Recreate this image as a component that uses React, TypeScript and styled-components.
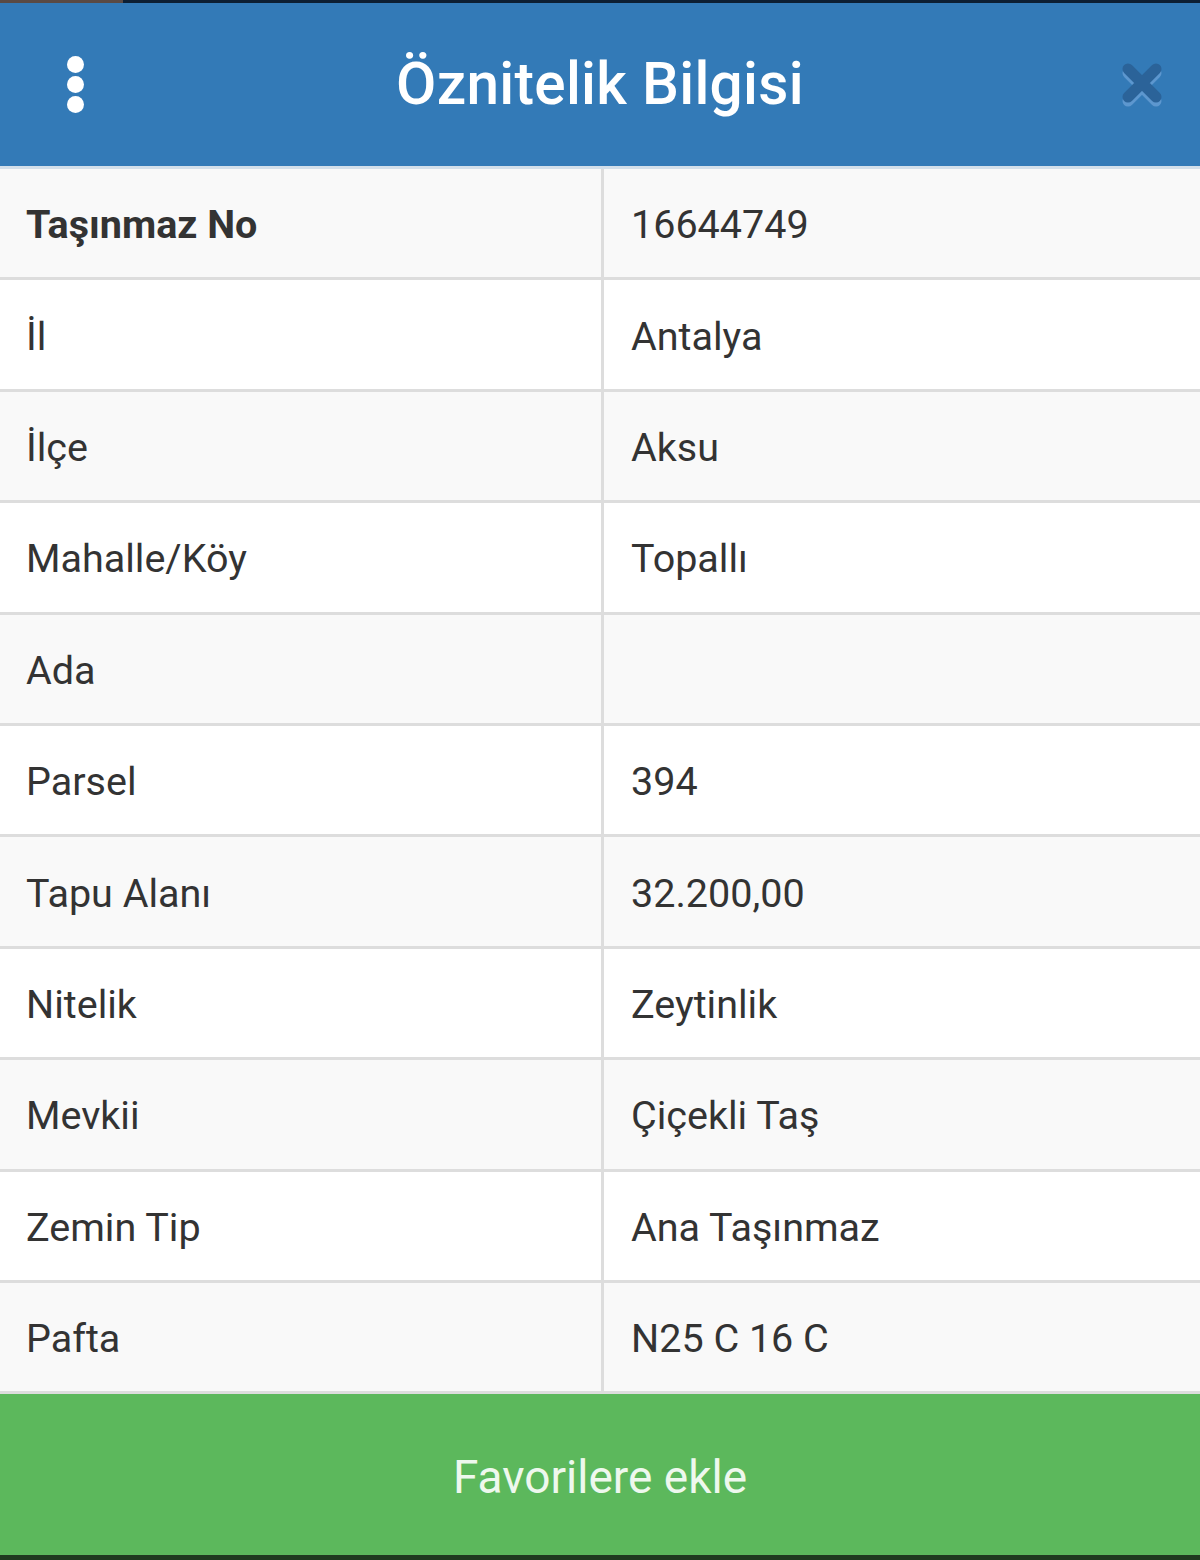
import React from 'react';
import styled, { createGlobalStyle } from 'styled-components';

const GlobalStyle = createGlobalStyle`
  html, body {
    margin: 0;
    padding: 0;
    background: #ffffff;
  }
  body {
    font-family: Roboto, "Noto Sans", "Liberation Sans", sans-serif;
  }
`;

const Page = styled.div`
  width: 1200px;
  height: 1560px;
  display: flex;
  flex-direction: column;
  overflow: hidden;
`;

const StatusStrip = styled.div`
  height: 3px;
  flex-shrink: 0;
  background: linear-gradient(to right, #5a4a44 0, #5a4a44 123px, #0d1f33 123px);
`;

const Header = styled.header`
  height: 163px;
  flex-shrink: 0;
  display: grid;
  grid-template-columns: 150px 1fr 150px;
  align-items: center;
  background: #337ab7;
  border-bottom: 3px solid #d3dfea;
`;

const MenuButton = styled.button`
  background: transparent;
  border: none;
  padding: 0;
  margin-left: 64px;
  width: 22px;
  display: flex;
  flex-direction: column;
  align-items: center;
  gap: 3px;
  cursor: pointer;
`;

const Dot = styled.span`
  width: 17px;
  height: 17px;
  border-radius: 50%;
  background: #ffffff;
`;

const Title = styled.h1`
  margin: 0 0 2px;
  text-align: center;
  color: #ffffff;
  font-size: 58.5px;
  font-weight: 500;
  letter-spacing: 0.3px;
`;

const CloseButton = styled.button`
  justify-self: end;
  margin-right: 34px;
  background: transparent;
  border: none;
  padding: 0;
  cursor: pointer;
  display: flex;
`;

const Table = styled.div`
  display: flex;
  flex-direction: column;
`;

const Row = styled.div<{ $striped: boolean }>`
  height: 111.4px;
  box-sizing: border-box;
  display: grid;
  grid-template-columns: 601px 1fr;
  background: ${(p) => (p.$striped ? '#f9f9f9' : '#ffffff')};
  border-bottom: 3px solid #dddddd;
`;

const Cell = styled.div<{ $bold?: boolean }>`
  display: flex;
  align-items: center;
  padding-left: 26px;
  padding-top: 3px;
  color: #333333;
  font-size: 39.5px;
  font-weight: ${(p) => (p.$bold ? 700 : 400)};
  & + & {
    border-left: 3px solid #dddddd;
    padding-left: 27px;
  }
`;

const FavoriteButton = styled.button`
  height: 161px;
  flex-shrink: 0;
  border: none;
  background: #5cb85c;
  color: #eef8ee;
  font-family: Roboto, "Noto Sans", sans-serif;
  font-size: 46px;
  font-weight: 400;
  cursor: pointer;
  padding: 5px 0 0;
`;

const BottomStrip = styled.div`
  flex: 1;
  background: #1f3a1f;
`;

const rows: [string, string][] = [
  ['Taşınmaz No', '16644749'],
  ['İl', 'Antalya'],
  ['İlçe', 'Aksu'],
  ['Mahalle/Köy', 'Topallı'],
  ['Ada', ''],
  ['Parsel', '394'],
  ['Tapu Alanı', '32.200,00'],
  ['Nitelik', 'Zeytinlik'],
  ['Mevkii', 'Çiçekli Taş'],
  ['Zemin Tip', 'Ana Taşınmaz'],
  ['Pafta', 'N25 C 16 C'],
];

function CloseIcon() {
  return (
    <svg width="46" height="48" viewBox="0 0 46 48">
      <g strokeLinecap="round" strokeWidth="11" fill="none">
        <path d="M8 12 L36 40 M36 12 L8 40" stroke="#5d97cf" />
        <path d="M8 8 L36 36 M36 8 L8 36" stroke="#2b6399" />
      </g>
    </svg>
  );
}

export default function App() {
  return (
    <Page>
      <GlobalStyle />
      <StatusStrip />
      <Header>
        <MenuButton aria-label="menu">
          <Dot />
          <Dot />
          <Dot />
        </MenuButton>
        <Title>Öznitelik Bilgisi</Title>
        <CloseButton aria-label="kapat">
          <CloseIcon />
        </CloseButton>
      </Header>
      <Table>
        {rows.map(([label, value], i) => (
          <Row key={label} $striped={i % 2 === 0}>
            <Cell $bold={i === 0}>{label}</Cell>
            <Cell>{value}</Cell>
          </Row>
        ))}
      </Table>
      <FavoriteButton>Favorilere ekle</FavoriteButton>
      <BottomStrip />
    </Page>
  );
}
